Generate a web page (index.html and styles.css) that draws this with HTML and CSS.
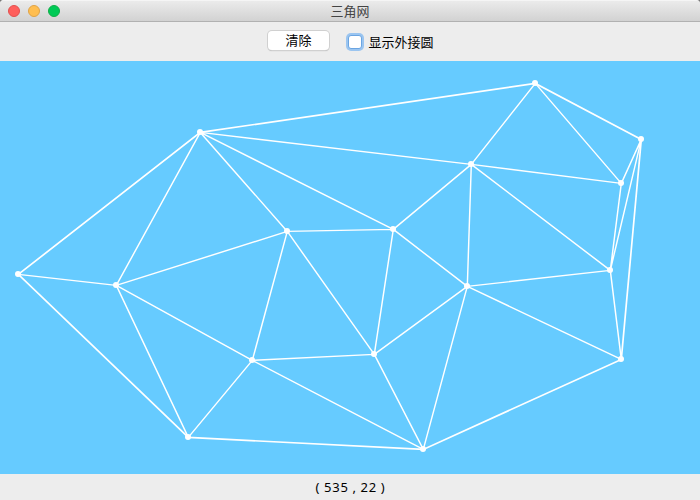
FILE: index.html
```html
<!DOCTYPE html>
<html lang="zh-CN">
<head>
<meta charset="utf-8">
<title>三角网</title>
<link rel="stylesheet" href="styles.css">
</head>
<body>
<div class="window">
  <header class="titlebar">
    <div class="lights">
      <span class="light close"></span>
      <span class="light minimize"></span>
      <span class="light maximize"></span>
    </div>
    <h1 class="title">三角网</h1>
  </header>
  <div class="toolbar">
    <button class="clear" type="button">清除</button>
    <label class="option"><input class="check" type="checkbox"><span>显示外接圆</span></label>
  </div>
  <svg class="canvas" viewBox="0 61 700 413">
    <g class="edges" transform="translate(.3 .4)">
      <path d="M200 132L287 231M200 132L393 229M200 132L471 164M200 132L116 285M18 274L116 285M116 285L287 231M116 285L252 360M116 285L188 437M188 437L252 360M287 231L393 229M287 231L252 360M287 231L374 354M393 229L471 164M393 229L467 286M393 229L374 354M252 360L374 354M252 360L423 449M374 354L467 286M374 354L423 449M467 286L423 449M467 286L621 359M467 286L610 270M467 286L471 164M471 164L535 83M471 164L621 183M471 164L610 270M535 83L621 183M621 183L641 139M621 183L610 270M641 139L610 270M610 270L621 359"/>
      <path class="hull" d="M18 274L200 132L535 83L641 139L621 359L423 449L188 437Z"/>
    </g>
    <g class="nodes">
      <circle cx="18" cy="274" r="3"/><circle cx="116" cy="285" r="3"/><circle cx="200" cy="132" r="3"/><circle cx="188" cy="437" r="3"/>
      <circle cx="252" cy="360" r="3"/><circle cx="287" cy="231" r="3"/><circle cx="393" cy="229" r="3"/><circle cx="374" cy="354" r="3"/>
      <circle cx="423" cy="449" r="3"/><circle cx="467" cy="286" r="3"/><circle cx="471" cy="164" r="3"/><circle cx="535" cy="83" r="3"/>
      <circle cx="621" cy="183" r="3"/><circle cx="641" cy="139" r="3"/><circle cx="610" cy="270" r="3"/><circle cx="621" cy="359" r="3"/>
    </g>
  </svg>
  <footer class="status">( 535 , 22 )</footer>
</div>
</body>
</html>
```
FILE: styles.css
```css
* {
  box-sizing: border-box;
}

body {
  margin: 0;
  background: #777;
  font: 13px/18px "Noto Sans CJK SC", sans-serif;
  color: #000;
}

.window {
  display: grid;
  grid-template-rows: 22px 39px 413px 26px;
  width: 700px;
  height: 500px;
  overflow: hidden;
  background: #ededed;
  border-radius: 4px 4px 0 0;
}

.titlebar {
  display: grid;
  grid-template-columns: 62px 1fr 62px;
  align-items: center;
  background: linear-gradient(#ebebeb, #d2d2d2);
  border-top: 1px solid #f5f5f5;
  border-bottom: 1px solid #b1b1b1;
}

.lights {
  display: flex;
  gap: 8px;
  padding-left: 8px;
}

.light {
  width: 12px;
  height: 12px;
  border: 1px solid;
  border-radius: 50%;
}

.close {
  background: #ff5f5c;
  border-color: #e2504e;
}

.minimize {
  background: #ffbe50;
  border-color: #dfa346;
}

.maximize {
  background: #00ca56;
  border-color: #10ae48;
}

.title {
  margin: 0;
  font-size: 13px;
  font-weight: 400;
  line-height: 18px;
  text-align: center;
  color: #444;
}

.toolbar {
  display: flex;
  justify-content: center;
  align-items: flex-start;
  gap: 19px;
  padding: 9px 0 0 2px;
}

.clear {
  width: 61px;
  height: 19px;
  padding: 0 1px 1px 0;
  border: 0;
  border-radius: 4px;
  background: #fff;
  box-shadow: 0 0 0 1px #d0d0d0, 0 1px 1px #aaa;
  font: inherit;
}

.option {
  display: flex;
  align-items: center;
  gap: 6px;
  padding-top: 2px;
}

.check {
  appearance: none;
  width: 14px;
  height: 14px;
  margin: 0;
  border: 1px solid #6ba5e2;
  border-radius: 3px;
  background: #fff;
  box-shadow: 0 0 0 2px #9bc5f0;
}

.canvas {
  display: block;
  width: 700px;
  height: 413px;
  background: #66cbff;
}

.edges {
  fill: none;
  stroke: #fff;
  stroke-width: 1.45;
}

.hull {
  stroke-width: 1.7;
}

.nodes {
  fill: #fff;
}

.status {
  padding-left: 1px;
  font-family: "Noto Sans", sans-serif;
  font-size: 13px;
  line-height: 27px;
  letter-spacing: 0.9px;
  word-spacing: -0.7px;
  text-align: center;
}
```
